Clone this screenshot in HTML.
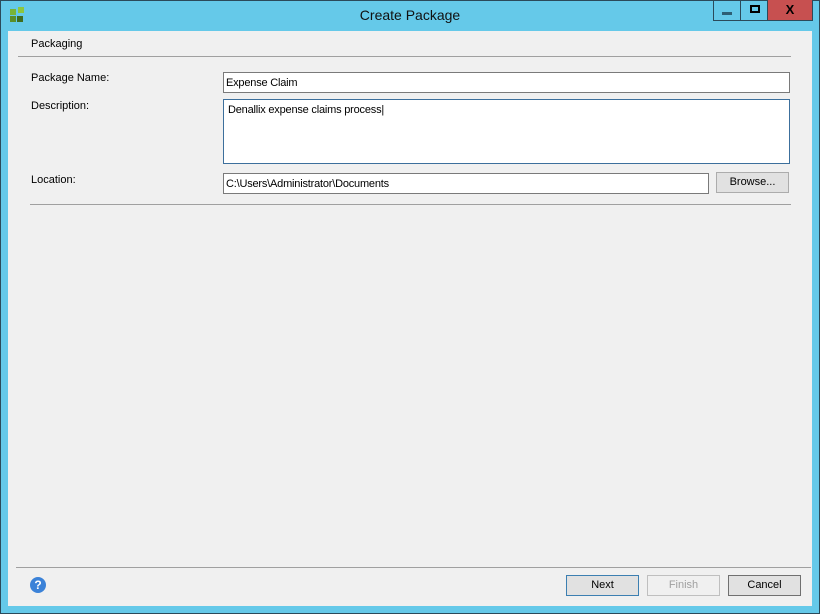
<!DOCTYPE html>
<html><head><style>
body{margin:0;width:820px;height:614px;overflow:hidden;background:#65c9e9;font-family:"Liberation Sans",sans-serif;font-size:11px;color:#000;position:relative}
.abs{position:absolute}
.frame{left:0;top:0;width:818px;height:612px;border:1px solid #2b4a5a}
.client{left:8px;top:31px;width:804px;height:575px;background:#f0f0f0}
.inp{position:absolute;background:#fff;border:1px solid #7a7a7a;box-sizing:border-box;padding:4px 2px;font-size:11px;letter-spacing:-0.2px}
.btn{position:absolute;top:575px;width:73px;height:21px;box-sizing:border-box;border:1px solid #acacac;background:#e1e1e1;text-align:center;line-height:19px}
</style></head><body>
<div class="abs frame"></div>
<div class="abs" style="left:10px;top:9px;width:6px;height:6px;background:#78b437"></div>
<div class="abs" style="left:18px;top:7px;width:6px;height:6px;background:#8cc63f"></div>
<div class="abs" style="left:10px;top:16px;width:6px;height:6px;background:#5a8f2a"></div>
<div class="abs" style="left:17px;top:16px;width:6px;height:6px;background:#3f6d1f"></div>
<div class="abs" style="left:0;top:7px;width:820px;text-align:center;font-size:14px;color:#111">Create Package</div>
<div class="abs" style="left:713px;top:0;width:28px;height:21px;border:1px solid #2b4a5a;border-top:none;box-sizing:border-box"></div>
<div class="abs" style="left:722px;top:12px;width:10px;height:3px;background:#2d5f75"></div>
<div class="abs" style="left:740px;top:0;width:28px;height:21px;border:1px solid #2b4a5a;border-top:none;box-sizing:border-box"></div>
<div class="abs" style="left:750px;top:5px;width:10px;height:8px;border:2px solid #000;box-sizing:border-box"></div>
<div class="abs" style="left:767px;top:0;width:46px;height:21px;background:#c75050;border:1px solid #2b4a5a;border-top:none;box-sizing:border-box;text-align:center;font-weight:bold;font-size:13px;line-height:20px">X</div>
<div class="abs client"></div>
<div class="abs" style="left:31px;top:38px">Packaging</div>
<div class="abs" style="left:18px;top:56px;width:773px;height:1px;background:#a0a0a0"></div>
<div class="abs" style="left:31px;top:72px">Package Name:</div>
<div class="abs" style="left:31px;top:100px">Description:</div>
<div class="abs" style="left:31px;top:174px">Location:</div>
<div class="inp" style="left:223px;top:72px;width:567px;height:21px">Expense Claim</div>
<div class="inp" style="left:223px;top:99px;width:567px;height:65px;border-color:#3c6f9c;padding:4px 4px">Denallix expense claims process|</div>
<div class="inp" style="left:223px;top:173px;width:486px;height:21px">C:\Users\Administrator\Documents</div>
<div class="btn" style="left:716px;top:172px;height:21px">Browse...</div>
<div class="abs" style="left:30px;top:204px;width:761px;height:1px;background:#a0a0a0"></div>
<div class="abs" style="left:16px;top:567px;width:795px;height:1px;background:#a0a0a0"></div>
<div class="abs" style="left:30px;top:577px;width:16px;height:16px;border-radius:50%;background:#3b82d8;color:#fff;font-weight:bold;text-align:center;line-height:16px;font-size:12px">?</div>
<div class="btn" style="left:566px;border-color:#3c7fb1">Next</div>
<div class="btn" style="left:647px;color:#a0a0a0;background:#f0f0f0;border-color:#bfbfbf">Finish</div>
<div class="btn" style="left:728px;border-color:#707070">Cancel</div>
</body></html>
